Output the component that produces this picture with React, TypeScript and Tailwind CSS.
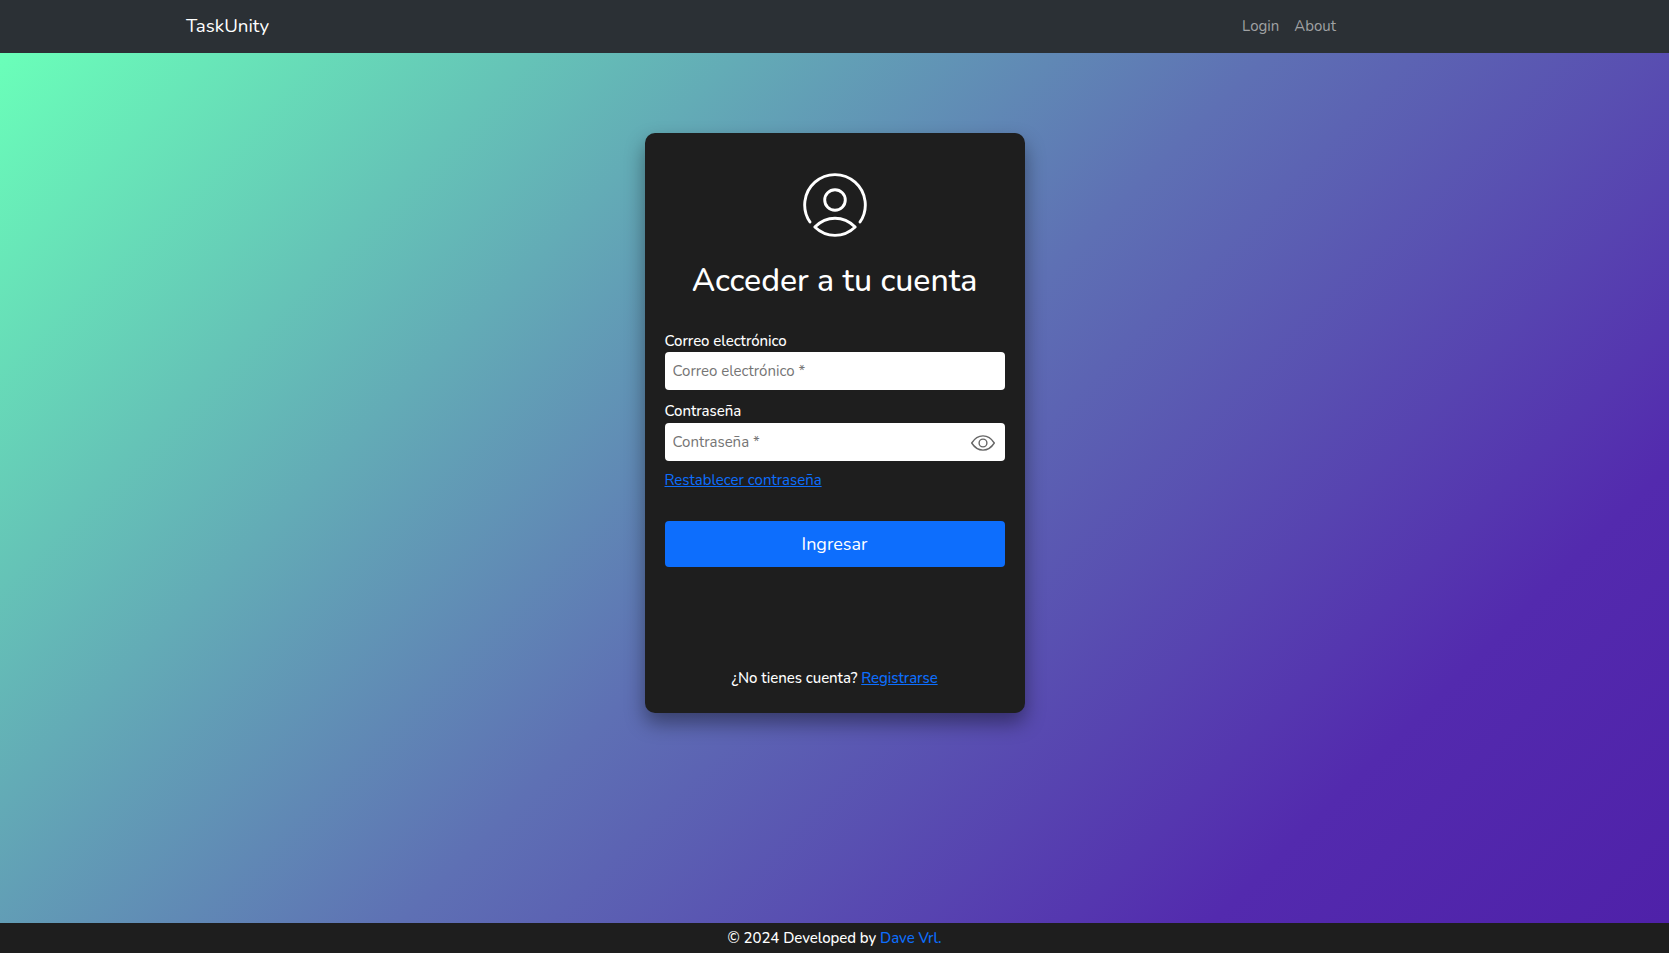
import React from "react";

function UserIcon() {
  return (
    <svg width="64" height="64" viewBox="0 0 64 64" fill="none" stroke="white" strokeWidth="2.9" strokeLinecap="round" strokeLinejoin="round">
      <path d="M7 49A30.300 30.300 0 1 1 57 49" />
      <circle cx="32" cy="27" r="10.300" />
      <path d="M11.800 54C17.500 48.500 24.500 45.300 32 45.300S46.500 48.500 52.200 54C46.500 59.500 39.500 62.400 32 62.400S17.500 59.500 11.800 54Z" />
    </svg>
  );
}

function EyeIcon() {
  return (
    <svg className="mt-px" width="24" height="24" viewBox="0 0 24 24" fill="none" stroke="#666" strokeWidth="1.4" strokeLinejoin="round">
      <path d="M.7 12C3.700 7.300 7.600 4.900 12 4.900S20.300 7.300 23.300 12C20.300 16.700 16.400 19.100 12 19.100S3.700 16.700 .7 12Z" />
      <circle cx="12" cy="12" r="3.900" />
    </svg>
  );
}

export default function App() {
  return (
    <div className="flex h-[953px] flex-col bg-[#1e1e1e] font-['Nunito','Lato',sans-serif] text-[15px] text-white">
      <nav className="flex h-[53px] shrink-0 items-center justify-between bg-[#2b3035] pr-[333px] pl-[186px]">
        <a className="text-[18.75px]">TaskUnity</a>
        <div className="flex gap-[15px] text-[#a0a2a4]">
          <a>Login</a>
          <a>About</a>
        </div>
      </nav>
      <main className="flex h-[870px] shrink-0 justify-center bg-[linear-gradient(135deg,#6affb9_0%,#5e70b4_50%,#532aae_82%,#4f21a9_100%)] pt-20">
        <section className="flex h-[580px] w-[380px] flex-col items-center rounded-[10px] bg-[#1e1e1e] px-5 pt-10 shadow-[0_10px_20px_rgba(0,0,0,0.4)]">
          <UserIcon />
          <h1 className="mt-6 text-[32px] leading-10 font-medium">Acceder a tu cuenta</h1>
          <form className="flex w-full flex-col">
            <label className="mt-7 h-[23px] leading-6 font-medium tracking-[-0.05px]">Correo electrónico</label>
            <input className="h-[38px] rounded bg-white px-2 placeholder:text-[#757575]" placeholder="Correo electrónico *" />
            <label className="mt-[9px] h-6 leading-6 font-medium tracking-[-0.05px]">Contraseña</label>
            <div className="flex h-[38px] items-center rounded bg-white pr-2.5 pl-2">
              <input className="min-w-0 flex-1 placeholder:text-[#757575]" placeholder="Contraseña *" />
              <EyeIcon />
            </div>
            <a className="mt-[7px] self-start leading-6 text-[#0d6efd] underline">Restablecer contraseña</a>
            <button type="button" className="mt-[29px] h-[46px] rounded bg-[#0d6efd] text-[18px]">Ingresar</button>
          </form>
          <p className="mt-[99px] leading-6 font-medium tracking-[-0.05px]">
            ¿No tienes cuenta? <a className="text-[#0d6efd] underline">Registrarse</a>
          </p>
        </section>
      </main>
      <footer className="flex h-[30px] items-center justify-center font-medium tracking-[-0.05px]">
        <p>© 2024 Developed by <a className="text-[#0d6efd]">Dave Vrl.</a></p>
      </footer>
    </div>
  );
}
